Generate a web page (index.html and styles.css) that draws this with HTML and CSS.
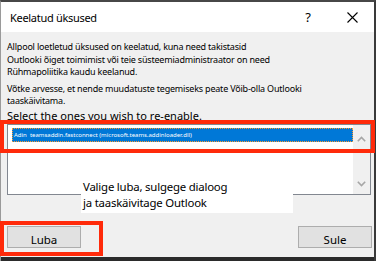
FILE: index.html
```html
<!DOCTYPE html>
<html lang="et">
<head>
<meta charset="utf-8">
<title>Keelatud üksused</title>
<link rel="stylesheet" href="styles.css">
</head>
<body>
<div class="window">
  <div class="titlebar">
    <span class="title">Keelatud üksused</span>
    <span class="help">?</span>
    <svg class="close" width="11" height="11" viewBox="0 0 11 11"><path d="M0.5 0.5 L10.5 10.5 M10.5 0.5 L0.5 10.5" stroke="#000" stroke-width="1.1" fill="none"/></svg>
  </div>
  <div class="content">
    <p class="info">Allpool loetletud üksused on keelatud, kuna need takistasid<br>Outlooki õiget toimimist või teie süsteemiadministraator on need<br>Rühmapoliitika kaudu keelanud.</p>
    <p class="info second">Võtke arvesse, et nende muudatuste tegemiseks peate Võib-olla Outlooki<br>taaskäivitama.</p>
    <div class="select">Select the ones you wish to re-enable.</div>
    <div class="listwrap">
      <div class="listbox">
        <div class="items">
          <div class="item selected">Adin&nbsp; teamsaddin.fastconnect (microsoft.teams.addinloader.dll)</div>
        </div>
        <div class="scrollbar">
          <svg width="9" height="6" viewBox="0 0 9 6"><path d="M0.8 5.2 L4.5 1.5 L8.2 5.2" stroke="#a6a6a6" stroke-width="1.6" fill="none"/></svg>
          <svg width="9" height="6" viewBox="0 0 9 6"><path d="M0.8 0.8 L4.5 4.5 L8.2 0.8" stroke="#a6a6a6" stroke-width="1.6" fill="none"/></svg>
        </div>
      </div>
      <div class="highlight list-hl"></div>
      <div class="note">Valige luba, sulgege dialoog<br>ja taaskäivitage Outlook</div>
    </div>
    <div class="buttons">
      <div class="btnwrap">
        <button class="btn">Luba</button>
        <div class="highlight btn-hl"></div>
      </div>
      <button class="btn">Sule</button>
    </div>
  </div>
  <div class="bottombar"></div>
</div>
</body>
</html>
```
FILE: styles.css
```css
* { box-sizing: border-box; }
html, body { margin: 0; padding: 0; }
body {
  width: 376px;
  height: 261px;
  overflow: hidden;
  background: #f0f0f0;
  font-family: "Noto Sans", "Open Sans", "Liberation Sans", sans-serif;
}
.window {
  width: 376px;
  height: 261px;
  border-top: 2px solid #474747;
  border-right: 2px solid #3a3a3a;
  border-left: 1px solid #9a9a9a;
  display: flex;
  flex-direction: column;
  background: #f0f0f0;
}
.titlebar {
  height: 30px;
  background: #fff;
  display: flex;
  align-items: center;
  padding-left: 9px;
  flex: none;
}
.title {
  font-size: 11px;
  letter-spacing: -0.3px;
  color: #000;
  flex: 1;
}
.help {
  font-size: 13px;
  color: #000;
  margin-right: 36px;
}
.close { margin-right: 16px; }
.content {
  flex: 1;
  padding: 9px 0 0 6px;
  display: flex;
  flex-direction: column;
}
.info {
  margin: 0;
  font-size: 9px;
  line-height: 12.6px;
  color: #000;
  letter-spacing: -0.2px;
}
.info.second { margin-top: 4px; }
.select {
  font-size: 11px;
  line-height: 14px;
  margin-top: 1px;
  color: #000;
}
.listwrap {
  position: relative;
  margin-top: 1px;
  height: 71px;
  width: 364px;
}
.listbox {
  height: 71px;
  width: 364px;
  border: 1px solid #828790;
  background: #fff;
  display: flex;
}
.items {
  flex: 1;
  padding: 3px 0 0 4px;
}
.item {
  height: 14px;
  font-size: 6px;
  line-height: 14px;
  padding-left: 2px;
  white-space: nowrap;
}
.item.selected {
  background: #0078d7;
  color: #fff;
  outline: 1px dotted #ff9a2e;
  outline-offset: -1px;
}
.scrollbar {
  width: 17px;
  background: #f0f0f0;
  display: flex;
  flex-direction: column;
  justify-content: space-between;
  align-items: center;
  padding: 11px 0 7px;
}
.highlight {
  position: absolute;
  border: 4px solid #ff2a0a;
  pointer-events: none;
}
.list-hl {
  left: -7px;
  top: -4px;
  width: 375px;
  height: 33px;
}
.note {
  position: absolute;
  left: 74px;
  top: 53px;
  width: 212px;
  height: 36px;
  background: #fff;
  font-size: 11.4px;
  letter-spacing: -0.2px;
  line-height: 16px;
  padding: 2px 0 0 2px;
  color: #000;
}
.buttons {
  display: flex;
  justify-content: space-between;
  margin-top: 31px;
  padding-right: 2px;
}
.btnwrap { position: relative; }
.btn {
  width: 74px;
  height: 22px;
  background: #e1e1e1;
  border: 1px solid #adadad;
  font-family: "Noto Sans", "Open Sans", sans-serif;
  font-size: 11.5px;
  padding: 5px 0 0;
  line-height: 16px;
  color: #000;
  margin: 0;
}
.btn-hl {
  left: -7px;
  top: -5px;
  width: 103px;
  height: 35px;
}
.bottombar {
  height: 4px;
  background: #2b2b2b;
  flex: none;
}
```
